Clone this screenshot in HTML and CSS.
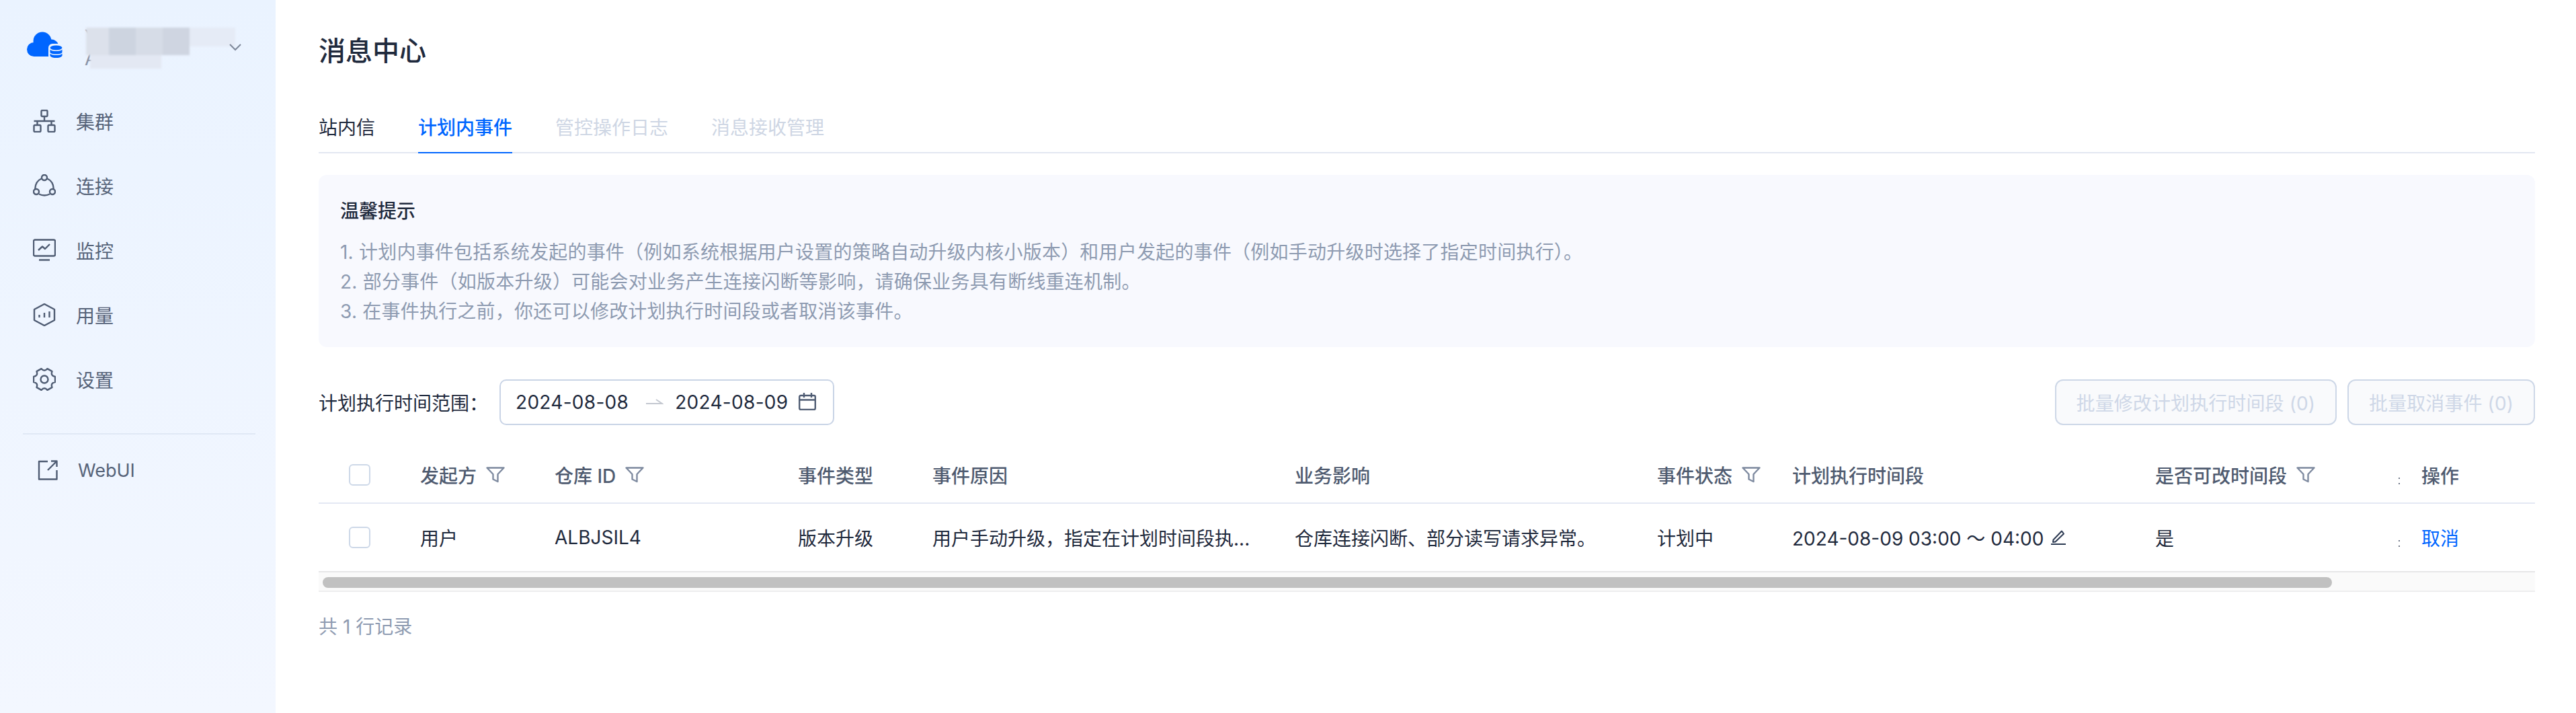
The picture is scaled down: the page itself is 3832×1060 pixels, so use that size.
FILE: index.html
```html
<!DOCTYPE html>
<html lang="zh-CN">
<head>
    <meta charset="UTF-8">
    <title>消息中心</title>
    <link rel="stylesheet" href="styles.css">
</head>
<body>

    <!-- Sidebar -->
    <aside class="sidebar">
        <div class="account">
            <svg class="logo" viewBox="0 0 54 40">
                <g class="logo-fill">
                    <circle cx="23" cy="14" r="13.500"/>
                    <circle cx="10.500" cy="26.500" r="10.500"/>
                    <circle cx="36" cy="23" r="11.500"/>
                    <rect x="10" y="20" width="28" height="17"/>
                </g>
                <rect class="logo-halo" x="32" y="18" width="24" height="24" rx="6"/>
                <g class="logo-fill">
                    <ellipse cx="43.500" cy="24" rx="9" ry="3.500"/>
                    <path d="M34.500 26.500C36 28.500 40 29 43.500 29C47 29 51 28.500 52.500 26.500V31C51 33 47 33.500 43.500 33.500C40 33.500 36 33 34.500 31Z"/>
                    <path d="M34.500 32.500C36 34.500 40 35 43.500 35C47 35 51 34.500 52.500 32.500V36C51 38.500 47 39 43.500 39C40 39 36 38.500 34.500 36Z"/>
                </g>
            </svg>
            <div class="account-name">
                <span>Y</span>
                <span>A</span>
            </div>
            <!-- Masked account details -->
            <div class="mask">
                <i class="m1"></i><i class="m2"></i><i class="m3"></i><i class="m4"></i><i class="m5"></i><i class="m6"></i>
            </div>
            <svg class="chevron" viewBox="0 0 20 12"><path d="M2 2L10 10L18 2"/></svg>
        </div>

        <nav class="menu">
            <a href="#" class="menu-item">
                <svg class="menu-icon" viewBox="0 0 34 34">
                    <rect x="12.500" y="1" width="9" height="9" rx="1.500"/>
                    <rect x="1.500" y="23" width="10" height="10" rx="1.500"/>
                    <rect x="22.500" y="23" width="10" height="10" rx="1.500"/>
                    <path d="M17 10V17M1.500 17H32.500M6.500 17V23M27.500 17V23"/>
                </svg>
                集群
            </a>
            <a href="#" class="menu-item">
                <svg class="menu-icon" viewBox="0 0 34 34">
                    <circle cx="17" cy="5" r="4"/>
                    <circle cx="5" cy="26" r="4"/>
                    <circle cx="29" cy="26" r="4"/>
                    <path d="M12.800 6.500C7 9 3.500 14 3.200 22M21.200 6.500C27 9 30.500 14 30.800 22M9 29.500C14 32 20 32 25 29.500"/>
                </svg>
                连接
            </a>
            <a href="#" class="menu-item">
                <svg class="menu-icon" viewBox="0 0 34 34">
                    <rect x="1" y="1.500" width="32" height="24" rx="2"/>
                    <path d="M9 31.500H25M8 17L14 11.500L18 15L25 8"/>
                </svg>
                监控
            </a>
            <a href="#" class="menu-item">
                <svg class="menu-icon" viewBox="0 0 34 34">
                    <path d="M17 1L32 9V25L17 33L2 25V9Z"/>
                    <path d="M9.500 17V21M17 14V21M24.500 12V21"/>
                </svg>
                用量
            </a>
            <a href="#" class="menu-item">
                <svg class="menu-icon" viewBox="0 0 34 34">
                    <path d="M33 13V21Q26 22.250 28.500 28.900L21.500 32.900Q17 27.500 12.500 32.900L5.500 28.900Q8 22.250 1 21V13Q8 11.750 5.500 5.100L12.500 1.100Q17 6.500 21.500 1.100L28.500 5.100Q26 11.750 33 13Z"/>
                    <circle cx="17" cy="17" r="5.500"/>
                </svg>
                设置
            </a>
            <div class="menu-divider"></div>
            <a href="#" class="menu-item menu-link">
                <svg class="menu-icon" viewBox="0 0 30 30">
                    <path d="M15 2H2V28.500H28.500V15M15 15L28 2M20 1.500H28.500V10"/>
                </svg>
                WebUI
            </a>
        </nav>
    </aside>

    <!-- Main content -->
    <main class="content">
        <h1 class="page-title">消息中心</h1>

        <div class="tabs">
            <a href="#" class="tab">站内信</a>
            <a href="#" class="tab active">计划内事件</a>
            <a href="#" class="tab disabled">管控操作日志</a>
            <a href="#" class="tab disabled">消息接收管理</a>
        </div>

        <div class="notice">
            <h3>温馨提示</h3>
            <p>1. 计划内事件包括系统发起的事件（例如系统根据用户设置的策略自动升级内核小版本）和用户发起的事件（例如手动升级时选择了指定时间执行）。</p>
            <p>2. 部分事件（如版本升级）可能会对业务产生连接闪断等影响，请确保业务具有断线重连机制。</p>
            <p>3. 在事件执行之前，你还可以修改计划执行时间段或者取消该事件。</p>
        </div>

        <div class="toolbar">
            <div class="range">
                <span class="range-label">计划执行时间范围：</span>
                <div class="date-picker">
                    <span class="date">2024-08-08</span>
                    <svg class="date-arrow" viewBox="0 0 26 12"><path d="M0 8H24L15 2"/></svg>
                    <span class="date">2024-08-09</span>
                    <svg class="date-icon" viewBox="0 0 26 26">
                        <rect x="1.200" y="4" width="23.600" height="21" rx="2"/>
                        <path d="M1.200 10.500H24.800M8 0V7M19 0V7"/>
                    </svg>
                </div>
            </div>
            <div class="batch">
                <button class="batch-btn" disabled>批量修改计划执行时间段 (0)</button>
                <button class="batch-btn" disabled>批量取消事件 (0)</button>
            </div>
        </div>

        <div class="table">
            <div class="row head">
                <div class="cell cell-check"><span class="checkbox"></span></div>
                <div class="cell">发起方<svg class="filter" viewBox="0 0 28 24"><path d="M1.500 1.500H26.500L17.500 11V22L10.500 18.500V11Z"/></svg></div>
                <div class="cell">仓库 ID<svg class="filter" viewBox="0 0 28 24"><path d="M1.500 1.500H26.500L17.500 11V22L10.500 18.500V11Z"/></svg></div>
                <div class="cell">事件类型</div>
                <div class="cell">事件原因</div>
                <div class="cell">业务影响</div>
                <div class="cell">事件状态<svg class="filter" viewBox="0 0 28 24"><path d="M1.500 1.500H26.500L17.500 11V22L10.500 18.500V11Z"/></svg></div>
                <div class="cell">计划执行时间段</div>
                <div class="cell">是否可改时间段<svg class="filter" viewBox="0 0 28 24"><path d="M1.500 1.500H26.500L17.500 11V22L10.500 18.500V11Z"/></svg></div>
                <div class="cell cell-action">操作</div>
            </div>
            <div class="row">
                <div class="cell cell-check"><span class="checkbox"></span></div>
                <div class="cell">用户</div>
                <div class="cell">ALBJSIL4</div>
                <div class="cell">版本升级</div>
                <div class="cell">用户手动升级，指定在计划时间段执...</div>
                <div class="cell">仓库连接闪断、部分读写请求异常。</div>
                <div class="cell">计划中</div>
                <div class="cell">2024-08-09 03:00 ～ 04:00<svg class="pencil" viewBox="0 0 22 22"><path d="M3.500 14.500L3 18L6.500 17.500L19 5.500L16 1.500Z"/><path d="M0 21H22"/></svg></div>
                <div class="cell">是</div>
                <div class="cell cell-action"><a href="#" class="link">取消</a></div>
            </div>
            <div class="scroll-track"><div class="scroll-thumb"></div></div>
        </div>

        <p class="total">共 1 行记录</p>
    </main>

</body>
</html>
```

FILE: styles.css
```css
* {
    box-sizing: border-box;
}

html, body {
    height: 100%;
}

body {
    margin: 0;
    display: flex;
    background: #fff;
    color: #1f2a3d;
    font-family: Inter, "Noto Sans CJK SC", sans-serif;
    font-size: 28px;
    overflow: hidden;
}

a {
    text-decoration: none;
}

/* Sidebar */
.sidebar {
    width: 410px;
    flex-shrink: 0;
    padding: 0 30px 0 34px;
    background: linear-gradient(180deg, #eaf3ff 0%, #f3f7ff 100%);
}

.account {
    position: relative;
    height: 132px;
    display: flex;
    align-items: flex-start;
    padding: 47px 0 0 6px;
}

.logo {
    width: 54px;
    height: 40px;
}

.logo-fill {
    fill: #0066ff;
}

.logo-halo {
    fill: #eaf3ff;
}

.account-name {
    display: flex;
    flex-direction: column;
    margin: -8px 0 0 32px;
    color: #8a94a8;
    line-height: 32px;
}

/* Blurred block over the account name */
.mask {
    position: absolute;
    left: 94px;
    top: 40px;
    width: 224px;
    height: 64px;
    filter: blur(1.500px);
}

.mask i {
    position: absolute;
    display: block;
}

.m1 { left: 0; top: 1px; width: 34px; height: 41px; background: #dce1eb; }
.m2 { left: 34px; top: 1px; width: 40px; height: 41px; background: #cdd4e0; }
.m3 { left: 74px; top: 1px; width: 40px; height: 41px; background: #d6dce7; }
.m4 { left: 114px; top: 1px; width: 40px; height: 41px; background: #cfd5e1; }
.m5 { left: 154px; top: 1px; width: 68px; height: 28px; background: #e5ebf6; }
.m6 { left: 6px; top: 42px; width: 106px; height: 20px; background: #e3e8f3; }

.chevron {
    position: absolute;
    right: 20px;
    top: 64px;
    width: 20px;
    height: 12px;
    fill: none;
    stroke: #7d8799;
    stroke-width: 2;
}

.menu {
    display: flex;
    flex-direction: column;
}

.menu-item {
    height: 96px;
    display: flex;
    align-items: center;
    gap: 30px;
    color: #566379;
    padding-left: 15px;
}

.menu-icon {
    width: 34px;
    height: 34px;
    flex-shrink: 0;
    fill: none;
    stroke: #4f5c73;
    stroke-width: 2.400;
    stroke-linejoin: round;
}

.menu-divider {
    margin-top: 32px;
    border-top: 2px solid #e0e8f5;
}

.menu-link {
    margin-top: 5px;
    padding-left: 22px;
    gap: 30px;
    font-size: 27px;
}

.menu-link .menu-icon {
    width: 30px;
    height: 30px;
}

/* Main content */
.content {
    flex: 1;
    min-width: 0;
    padding: 48px 61px 0 64px;
}

.page-title {
    margin: 0;
    font-size: 40px;
    font-weight: 500;
    line-height: 56px;
}

.tabs {
    display: flex;
    gap: 64px;
    height: 76px;
    margin-top: 48px;
    border-bottom: 2px solid #e3e7f1;
}

.tab {
    height: 76px;
    padding-top: 18px;
    line-height: 40px;
    color: #1f2a3d;
    border-bottom: 2px solid transparent;
}

.tab.active {
    color: #0066ff;
    font-weight: 500;
    border-bottom-color: #0066ff;
}

.tab.disabled {
    color: #ced6e4;
}

.notice {
    margin-top: 32px;
    height: 256px;
    padding: 32px;
    background: #f8f9fe;
    border-radius: 12px;
}

.notice h3 {
    margin: 0 0 17px;
    font-size: 28px;
    font-weight: 500;
    line-height: 44px;
}

.notice p {
    margin: 0;
    line-height: 44px;
    color: #8e9bb1;
    letter-spacing: 0.22px;
}

.toolbar {
    display: flex;
    justify-content: space-between;
    margin-top: 48px;
}

.range {
    display: flex;
    align-items: center;
}

.range-label {
    width: 269px;
}

.date-picker {
    width: 498px;
    height: 68px;
    display: flex;
    align-items: center;
    padding: 0 22px;
    border: 2px solid #c9d4e6;
    border-radius: 10px;
}

.date {
    letter-spacing: 0.3px;
}

.date-arrow {
    width: 26px;
    height: 12px;
    margin: 0 17px 0 26px;
    fill: none;
    stroke: #c4c8d0;
    stroke-width: 2;
}

.date-icon {
    width: 26px;
    height: 26px;
    margin-left: 16px;
    margin-top: -2px;
    fill: none;
    stroke: #4f5c73;
    stroke-width: 2.400;
}

.batch {
    display: flex;
    gap: 16px;
}

.batch-btn {
    height: 68px;
    padding: 0 30px;
    border: 2px solid #cdd7e7;
    border-radius: 12px;
    background: #f9fafc;
    color: #ced7e7;
    font-family: inherit;
    font-size: 28px;
    letter-spacing: 0.1px;
}

/* Table */
.table {
    margin-top: 32px;
}

.row {
    display: grid;
    grid-template-columns: 151px 200px 362px 200px 539px 539px 201px 540px 396px 169px;
    height: 100px;
    align-items: center;
}

.row.head {
    height: 85px;
    border-bottom: 2px solid #e4e8f3;
    color: #4f5b70;
    font-weight: 500;
}

.cell {
    display: flex;
    align-items: center;
    min-width: 0;
    position: relative;
}

.cell-check {
    padding-left: 45px;
}

.checkbox {
    width: 32px;
    height: 32px;
    background: #fff;
    border: 2px solid #cdd8e8;
    border-radius: 6px;
}

/* Two dots left of the fixed column */
.cell-action::before {
    content: "";
    position: absolute;
    left: -34px;
    top: 50%;
    width: 2px;
    height: 2px;
    margin-top: 4px;
    background: #6f7787;
    box-shadow: 0 8px 0 #6f7787;
}

.filter {
    width: 28px;
    height: 24px;
    margin-left: 14px;
    fill: none;
    stroke: #7f8ba0;
    stroke-width: 2.400;
    stroke-linejoin: round;
}

.pencil {
    width: 22px;
    height: 22px;
    margin-left: 11px;
    fill: none;
    stroke: #2c3a52;
    stroke-width: 2;
    stroke-linejoin: round;
}

.link {
    color: #0066ff;
}

.scroll-track {
    height: 31px;
    padding: 7px 6px 4px;
    background: #fafafa;
    border-top: 2px solid #e6e6e8;
    border-bottom: 2px solid #ededef;
}

.scroll-thumb {
    width: 2989px;
    height: 16px;
    border-radius: 8px;
    background: #c1c1c1;
}

.total {
    margin: 32px 0 0;
    line-height: 40px;
    color: #8e9bb1;
}
```
